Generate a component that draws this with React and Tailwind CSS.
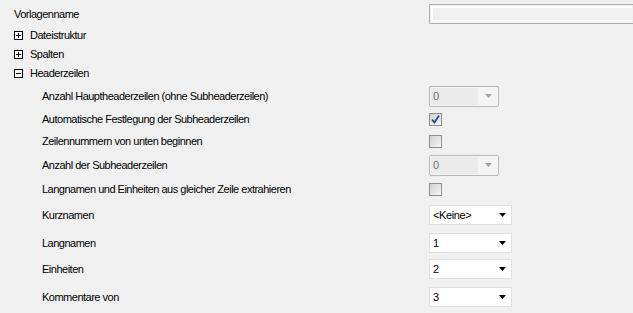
import React from "react";

const font = { fontFamily: "'Liberation Sans', Arial, sans-serif" };

function TreeBox({ open }) {
  return (
    <svg width="9" height="9" viewBox="0 0 9 9" className="shrink-0">
      <rect x="0.5" y="0.5" width="8" height="8" fill="#ffffff" stroke="#000000" />
      <line x1="2" y1="4.5" x2="7" y2="4.5" stroke="#000000" />
      {!open && <line x1="4.5" y1="2" x2="4.5" y2="7" stroke="#000000" />}
    </svg>
  );
}

function Checkbox({ checked }) {
  return (
    <div className="w-[13px] h-[13px] border border-[#8e8f8f] bg-gradient-to-br from-[#d0d0d0] to-[#f8f8f8] flex items-center justify-center">
      {checked && (
        <svg width="11" height="11" viewBox="0 0 11 11">
          <path d="M2 5.5 L4.5 8.5 L9 1.5" fill="none" stroke="#2b3fa0" strokeWidth="1.8" />
        </svg>
      )}
    </div>
  );
}

function DisabledSelect({ value }) {
  return (
    <div className="w-[70px] h-[21px] border border-[#b8b8b8] rounded-[2px] bg-[#f4f4f4] flex items-center pl-[1px]">
      <div className="w-[47px] h-[17px] bg-[#ebebeb] flex items-center pl-[2px] text-[11px] text-[#6d6d6d]">
        {value}
      </div>
      <div className="flex-1 flex items-center justify-center">
        <svg width="7" height="4" viewBox="0 0 7 4">
          <path d="M0 0 L7 0 L3.5 4 Z" fill="#a3a3a3" />
        </svg>
      </div>
    </div>
  );
}

function Select({ value }) {
  return (
    <div className="w-[83px] h-[20px] border border-[#e1e1e1] bg-white flex items-center pl-[3px] text-[11px] tracking-[-0.4px] text-black">
      <span className="flex-1">{value}</span>
      <svg width="7" height="4" viewBox="0 0 7 4" className="mr-[5px]">
        <path d="M0 0 L7 0 L3.5 4 Z" fill="#000000" />
      </svg>
    </div>
  );
}

function Row({ h, label, children }) {
  return (
    <div className="grid grid-cols-[429px_1fr] items-center" style={{ height: h }}>
      <div className="pl-[42px] text-[11px] tracking-[-0.5px] text-black whitespace-nowrap">{label}</div>
      <div className="flex items-center">{children}</div>
    </div>
  );
}

export default function App() {
  return (
    <div className="w-[633px] h-[313px] bg-[#f0f0f0] overflow-hidden pt-[4px]" style={font}>
      <div className="grid grid-cols-[429px_1fr] items-center h-[20px]">
        <div className="pl-[14px] text-[11px] tracking-[-0.5px] text-black">Vorlagenname</div>
        <div className="h-[20px] border border-[#adadad] border-r-0 rounded-l-[2px] bg-[#f0f0f0] p-[1px]">
          <div className="h-full border-2 border-white border-r-0" />
        </div>
      </div>
      <div className="h-[2px]" />
      {[
        ["Dateistruktur", false],
        ["Spalten", false],
        ["Headerzeilen", true],
      ].map(([t, open]) => (
        <div key={t} className="h-[19px] flex items-center pl-[14px] gap-[7px] text-[11px] tracking-[-0.5px] text-black">
          <TreeBox open={open} />
          <span>{t}</span>
        </div>
      ))}
      <div className="h-[1px]" />
      <Row h={24} label="Anzahl Hauptheaderzeilen (ohne Subheaderzeilen)">
        <DisabledSelect value="0" />
      </Row>
      <Row h={22} label="Automatische Festlegung der Subheaderzeilen">
        <Checkbox checked />
      </Row>
      <Row h={22} label="Zeilennummern von unten beginnen">
        <Checkbox />
      </Row>
      <Row h={26} label="Anzahl der Subheaderzeilen">
        <DisabledSelect value="0" />
      </Row>
      <Row h={22} label="Langnamen und Einheiten aus gleicher Zeile extrahieren">
        <Checkbox />
      </Row>
      <Row h={30} label="Kurznamen">
        <Select value="<Keine>" />
      </Row>
      <Row h={26} label="Langnamen">
        <Select value="1" />
      </Row>
      <Row h={26} label="Einheiten">
        <Select value="2" />
      </Row>
      <Row h={30} label="Kommentare von">
        <Select value="3" />
      </Row>
    </div>
  );
}
